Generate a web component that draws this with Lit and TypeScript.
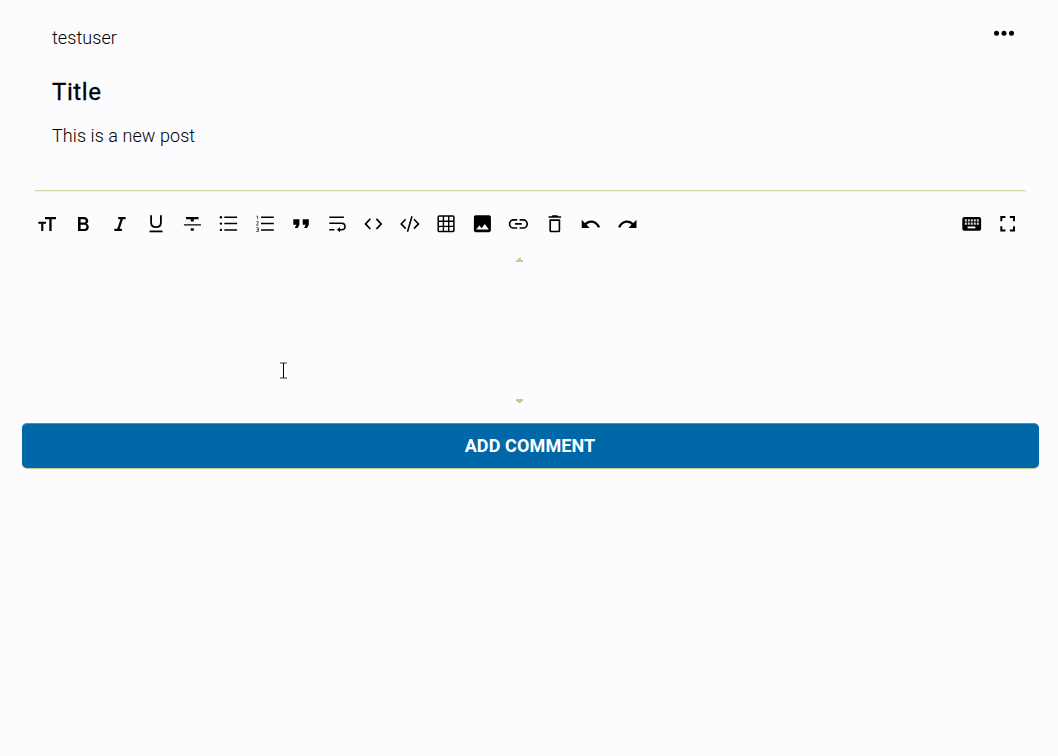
import { LitElement, html, css, svg } from "lit";
import { customElement } from "lit/decorators.js";

const icons: Record<string, unknown> = {
  size: svg`<path d="M10 5h11v2.200h-4.400V19h-2.300V7.200h-4.300zM3.300 9.700h7.700v2H8.300V19H6.200v-7.300H3.300z"/>`,
  bold: svg`<path transform="translate(0 1)" d="M15.600 10.790c.97-.67 1.650-1.770 1.650-2.790 0-2.260-1.750-4-4-4H7v14h7.040c2.090 0 3.710-1.700 3.710-3.790 0-1.520-.86-2.820-2.150-3.420zM9.600 6.200h3.400c1 0 1.700.8 1.700 1.700s-.7 1.700-1.700 1.700H9.600zm3.900 9.700H9.600v-4.100h3.900c1.100 0 1.900.9 1.900 2s-.8 2.100-1.900 2.100z"/>`,
  italic: svg`<path d="M10.200 5v2.300h2.300l-3.200 9.400H6.400V19h7.500v-2.300h-2.200l3.200-9.400h2.700V5z"/>`,
  underline: svg`<path d="M7.100 3.200v7.300c0 3 1.900 4.700 4.900 4.700s4.900-1.700 4.900-4.700V3.200" fill="none" stroke="currentColor" stroke-width="1.800"/><path d="M5.600 18.500h12.900v1.800H5.600z"/>`,
  strike: svg`<path d="M6 4.900h12.500v2.300h-4.700v2.200h-3V7.200H6zM3.900 12.200h17v1.400h-17zM10.800 16.200h3v2.500h-3z"/>`,
  bullets: svg`<circle cx="4.900" cy="5.200" r="1.200"/><circle cx="4.900" cy="11.600" r="1.200"/><circle cx="4.900" cy="17.900" r="1.200"/><path d="M8.300 4.400h12.800v1.500H8.300zm0 6.400h12.800v1.500H8.300zm0 6.400h12.800v1.500H8.300z"/>`,
  numbers: svg`<path d="M8 4.400h12.800v1.500H8zm0 6.400h12.800v1.500H8zm0 6.400h12.800v1.500H8z"/><path d="M3.300 4.200h1.300v3.200M3.300 9.700h2v.8L3.500 13.200h2.100M3.200 15.700h2.200v3.800H3.200m.5-1.900h1.700" fill="none" stroke="currentColor" stroke-width=".65"/>`,
  quote: svg`<path d="M4.300 7.200h6.100v5.500L8.600 15.900H5.700l1.600-3.200h-3zm9.400 0h6.100v5.500L18 15.900h-2.900l1.600-3.200h-3z"/>`,
  wrap: svg`<path d="M4.300 4.400h14.600v1.600H4.300zm0 12.700h5v1.500h-5z"/><path d="M4.300 11.200h12.500c4.300 0 4.300 6.500 0 6.500h-3" fill="none" stroke="currentColor" stroke-width="1.500"/><path d="m15 15.100-3 2.600 3 2.600z"/>`,
  code: svg`<path d="m9.300 6.800-4.800 5.100 4.800 5.100m6.100-10.200 4.800 5.100-4.800 5.100" fill="none" stroke="currentColor" stroke-width="1.700"/>`,
  codeblock: svg`<path d="m7.700 7.200-4.500 4.700 4.500 4.700m8.300-9.400 4.500 4.700-4.500 4.700M14 4.200 9.500 19.700" fill="none" stroke="currentColor" stroke-width="1.600"/>`,
  table: svg`<rect x="4.200" y="3.900" width="15.700" height="15.700" rx="1.200" fill="none" stroke="currentColor" stroke-width="1.500"/><path d="M9.400 4v15.700M14.700 4v15.700M4 9.200h16M4 14.400h16" fill="none" stroke="currentColor" stroke-width="1.400"/>`,
  image: svg`<path fill-rule="evenodd" d="M5.800 3.200H19c1.100 0 1.900.8 1.900 1.900v13.200c0 1.100-.8 1.900-1.900 1.900H5.800c-1.100 0-1.900-.8-1.900-1.900V5.100c0-1.100.8-1.900 1.900-1.900zM6.100 17.600h12.700l-4-5.500-3.200 4.100-2.200-2.600z"/>`,
  link: svg`<path d="M11.200 7.800H7.700a4.100 4.100 0 0 0 0 8.200h3.500m2.400-8.200h3.500a4.100 4.100 0 0 1 0 8.200h-3.500M9 11.900h6.800" fill="none" stroke="currentColor" stroke-width="1.650"/>`,
  trash: svg`<path d="M9.300 3.300h5l.8 1h3v1.500H5.500V4.300h3z"/><path d="M7.200 8.100h9.200v10.600q0 .8-.8.800H8q-.8 0-.8-.8z" fill="none" stroke="currentColor" stroke-width="1.650"/>`,
  undo: svg`<path d="M2.700 7.800v8.100h8L7.600 12.800c3.600-3.700 9-2.500 11.300 2.900l2.200-.7C18.300 8.500 11.300 6.200 5.800 11z"/>`,
  redo: svg`<path d="M21.500 7.800v8.100h-8l3.100-3.100c-3.600-3.700-9-2.500-11.300 2.900L3.100 15C5.900 8.500 12.900 6.200 18.400 11z"/>`,
  keyboard: svg`<rect x="2.300" y="5" width="18.800" height="13.700" rx="2"/><path d="M4.800 8.400h14M4.800 11.600h14" stroke="#d8d8d4" stroke-width="2.200" stroke-dasharray="2 1"/><path d="M7.600 14.500h7.800v1.900H7.600z" fill="#fcfcff"/>`,
  full: svg`<path d="M5.300 9.300V5h4.100m4.500 0H18v4.300m0 4.900v4.300h-4.100m-4.500 0H5.300v-4.300" fill="none" stroke="currentColor" stroke-width="2"/>`,
};

const formatting = ["size", "bold", "italic", "underline", "strike", "bullets", "numbers", "quote", "wrap", "code", "codeblock", "table", "image", "link", "trash", "undo", "redo"];
const views = ["keyboard", "full"];

@customElement("app-root")
export class AppRoot extends LitElement {
  static styles = css`
    :host { display: block; box-sizing: border-box; height: 756px; overflow: hidden; position: relative; background: #fcfcff; color: #000; font-family: Roboto, sans-serif; }
    .post { display: flex; justify-content: space-between; margin: 0 32px 0 35px; height: 190px; padding: 0 11px 0 17px; box-sizing: border-box; }
    .user, .body { font-size: 18px; font-weight: 300; line-height: 24px; letter-spacing: .07px; color: #000; }
    .user { padding-top: 26px; }
    h1 { margin: 27px 0 0; font-size: 24px; font-weight: 450; line-height: 30px; letter-spacing: .6px; -webkit-text-stroke: .3px #000; }
    .body { margin: 17px 0 0; }
    .more { width: 22px; height: 8px; margin-top: 29px; }
    .rule { margin: 0 32px 0 35px; border-top: 1px solid #d8d8a4; border-bottom: 1px dotted #e0e0e9; }
    .toolbar { display: flex; justify-content: space-between; height: 64px; align-items: center; padding: 0 32px 0 28.900px; }
    .group { display: flex; }
    .icon { width: 36.250px; height: 24px; display: flex; justify-content: center; }
    .icon svg { width: 24px; height: 24px; flex: none; }
    svg { fill: currentColor; display: block; }
    .editor { height: 147px; margin-top: 1px; display: flex; flex-direction: column; justify-content: space-between; align-items: center; padding-right: 20px; }
    .editor svg { width: 8px; height: 5px; fill: #c9c9a0; }
    .submit { display: flex; align-items: center; justify-content: center; box-sizing: border-box; width: 1017px; height: 45px; margin: 19px 0 0 22px; padding: 0 1px 1px 0; border: 0; border-top: 1px solid #4a90bf; border-radius: 5px; background: #0068a9; box-shadow: 0 1px 1px #bfc78c; color: #fff; font: 700 18px/21px Roboto, sans-serif; letter-spacing: .12px; }
    .cursor { position: absolute; left: 279px; top: 362px; width: 9px; height: 17px; }
  `;

  icon(name: string) {
    return html`<span class="icon"><svg viewBox="0 0 24 24">${icons[name]}</svg></span>`;
  }

  render() {
    return html`
      <article class="post">
        <div>
          <div class="user">testuser</div>
          <h1>Title</h1>
          <p class="body">This is a new post</p>
        </div>
        <svg class="more" viewBox="0 0 22 8"><circle cx="3.500" cy="4.200" r="2.500"/><circle cx="11" cy="4.200" r="2.500"/><circle cx="18.500" cy="4.200" r="2.500"/></svg>
      </article>
      <div class="rule"></div>
      <div class="toolbar">
        <div class="group">${formatting.map((n) => this.icon(n))}</div>
        <div class="group">${views.map((n) => this.icon(n))}</div>
      </div>
      <div class="editor">
        <svg viewBox="0 0 8 5"><path d="M1 5V3h2V1h3v2h2v2z"/></svg>
        <svg viewBox="0 0 8 5"><path d="M1 0h7v2H7v1H6v1H3V3H2V2H1z"/></svg>
      </div>
      <button class="submit">ADD COMMENT</button>
      <svg class="cursor" viewBox="0 0 9 17"><path d="M1 0h7v2H1zm0 15h7v2H1z" fill="#9c9c78"/><path d="M4 1h1v15H4z"/></svg>
    `;
  }
}
